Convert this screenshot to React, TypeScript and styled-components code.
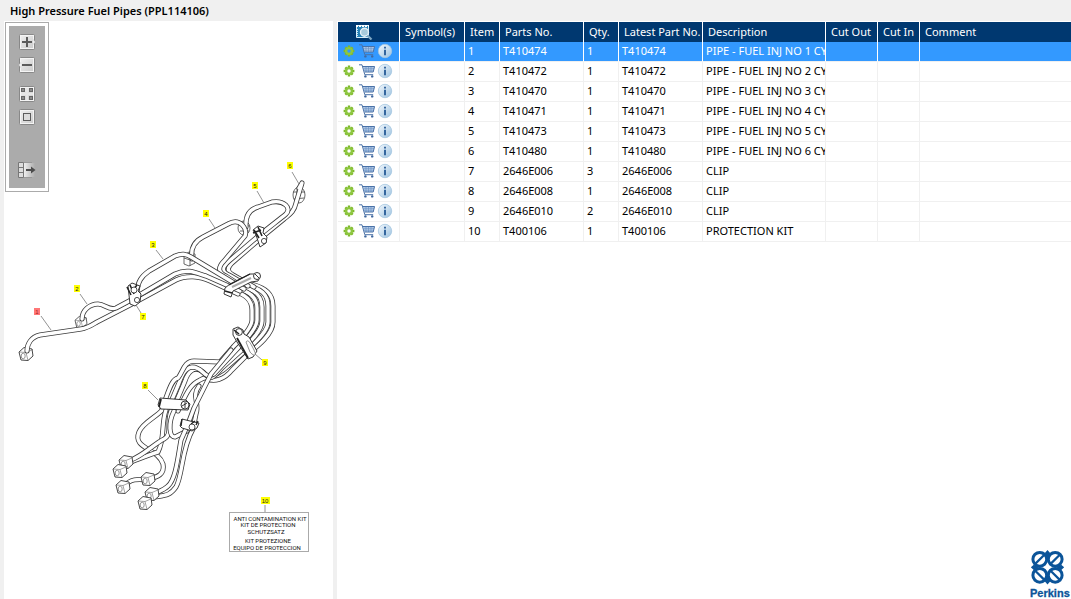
import React from 'react';
import styled, { createGlobalStyle } from 'styled-components';

const GlobalStyle = createGlobalStyle`
  * { box-sizing: border-box; }
  body { margin: 0; background: #f0f0f0; color: #000; font-family: "Noto Sans", "Open Sans", sans-serif; font-size: 11px; }
`;

const Page = styled.div`
  min-height: 100vh;
  display: flex;
  flex-direction: column;
`;
const Title = styled.h1`
  margin: 0;
  height: 21px;
  padding: 0 10px;
  font-family: "Noto Sans", "Open Sans", sans-serif;
  font-size: 11px;
  line-height: 21px;
  font-weight: 600;
`;
const Content = styled.main`
  flex: 1;
  display: grid;
  grid-template-columns: 329px minmax(0, 1fr);
  gap: 4px;
  padding-left: 4px;
`;
const DrawingPanel = styled.section`
  position: relative;
  background: #fff;
`;
const Drawing = styled.svg`
  display: block;
  width: 100%;
  height: auto;
`;
const Toolbar = styled.div`
  position: absolute;
  left: 1px;
  top: 1px;
  display: flex;
  flex-direction: column;
  align-items: center;
  gap: 7px;
  width: 44px;
  padding: 11px 0 13px;
  border: 1px solid #ababab;
  background: #ababab;
  box-shadow: inset 0 0 0 3px #fff;
`;
const ToolButton = styled.button<{ $space?: number }>`
  display: block;
  width: 18px;
  height: 16px;
  margin: ${p => p.$space || 0}px 0 0;
  padding: 0;
  border: 0;
  background: none;
  svg { display: block; }
`;
const PartsPanel = styled.section`
  display: flex;
  flex-direction: column;
  justify-content: space-between;
  padding: 1px 0 0 1px;
  background: #fff;
`;
const PartsTable = styled.table`
  width: 100%;
  table-layout: fixed;
  border-collapse: separate;
  border-spacing: 0;
`;
const HeadCell = styled.th`
  height: 20px;
  padding: 0 0 0 5px;
  background: #003870;
  color: #fff;
  border-right: 1px solid #fff;
  font-weight: 400;
  line-height: 20px;
  text-align: left;
  white-space: nowrap;
  &:first-child { padding: 0 0 0 17px; }
  &:last-child { border-right: 0; }
  svg { display: block; }
`;
const Row = styled.tr<{ $selected?: boolean }>`
  background: ${p => (p.$selected ? '#3399ff' : '#fff')};
  color: ${p => (p.$selected ? '#fff' : '#000')};
  td { border-right-color: ${p => (p.$selected ? '#fff' : '#f0f0f0')}; }
`;
const Cell = styled.td`
  height: 20px;
  padding: 0 0 2px 3px;
  border-right: 1px solid;
  border-bottom: 1px solid #f0f0f0;
  line-height: 17px;
  white-space: nowrap;
  overflow: hidden;
  &:last-child { border-right: 0; }
`;
const Actions = styled.div`
  display: flex;
  align-items: center;
  gap: 2px;
`;
const IconButton = styled.button`
  width: 16px;
  height: 16px;
  padding: 0;
  border: 0;
  background: none;
  svg { display: block; }
`;
const Brand = styled.footer`
  align-self: flex-end;
  width: 41px;
  svg { display: block; }
`;

const PlateIcon = ({ children }: { children: React.ReactNode }) => (
  <svg width="18" height="16" viewBox="0 0 18 16">
    <defs>
      <linearGradient id="plate" x1="0" y1="0" x2="1" y2="1">
        <stop offset="0" stopColor="#f2f2f2" />
        <stop offset="1" stopColor="#c9c9c9" />
      </linearGradient>
    </defs>
    {children}
  </svg>
);
const Plate = () => (
  <>
    <rect x="1.5" y=".5" width="15" height="15" rx="1" fill="url(#plate)" stroke="#888" />
    <rect x="2.5" y="1.5" width="13" height="13" fill="none" stroke="#f4f4f4" />
  </>
);
const ZoomInIcon = () => (
  <PlateIcon>
    <Plate />
    <path d="M15.5 6l2.2 2-2.2 2" fill="#eee" stroke="#999" strokeWidth=".6" />
    <path d="M4 8h10M9 3v10" stroke="#5c5c5c" strokeWidth="2" />
  </PlateIcon>
);
const ZoomOutIcon = () => (
  <PlateIcon>
    <Plate />
    <path d="M2.5 6L.3 8l2.2 2" fill="#eee" stroke="#999" strokeWidth=".6" />
    <path d="M4 8h10" stroke="#5c5c5c" strokeWidth="2" />
  </PlateIcon>
);
const FitIcon = () => (
  <PlateIcon>
    <Plate />
    <g fill="#8c8c8c" stroke="#666">
      <rect x="3.5" y="2.5" width="3" height="3" /><rect x="11.5" y="2.5" width="3" height="3" />
      <rect x="3.5" y="10.5" width="3" height="3" /><rect x="11.5" y="10.5" width="3" height="3" />
    </g>
    <path d="M3 8h12M9 2v12" stroke="#e6e6e6" strokeWidth="2" />
  </PlateIcon>
);
const ActualIcon = () => (
  <PlateIcon>
    <Plate />
    <rect x="5.5" y="4.5" width="7" height="7" fill="#dcdcdc" stroke="#5c5c5c" />
  </PlateIcon>
);
const HidePanelIcon = () => (
  <PlateIcon>
    <defs>
      <linearGradient id="fade"><stop offset="0" stopColor="#eee" /><stop offset="1" stopColor="#ababab" /></linearGradient>
    </defs>
    <rect x="6" y="1" width="11" height="14" fill="url(#fade)" />
    <path d="M.5 .5h5v15h-5z" fill="#ddd" stroke="#777" />
    <path d="M0 5.5h5M0 10.5h5" stroke="#777" />
    <path d="M6 .5h8M6 15.5h8" stroke="#999" />
    <path d="M8 8h6" stroke="#4c4c4c" strokeWidth="2" />
    <path d="M13 4.5l4.5 3.5-4.5 3.5z" fill="#4c4c4c" />
  </PlateIcon>
);

const GearIcon = ({ hole }: { hole: string }) => (
  <svg width="16" height="16" viewBox="0 0 16 16">
    <path d="M8 2.6v10.8M2.6 8h10.8M4.3 4.3l7.4 7.4M11.7 4.3l-7.4 7.4" stroke="#7fb92c" strokeWidth="2.4" />
    <circle cx="8" cy="8" r="2.9" fill={hole} stroke="#8dc63f" strokeWidth="2.4" />
  </svg>
);
const CartIcon = () => (
  <svg width="16" height="16" viewBox="0 0 16 16">
    <path d="M4 3.5h11.5L14 9H5.5z" fill="#b9cfe9" />
    <path d="M4.5 5.3h10.5M5 7.2h9.5M7 3.5V9M9.5 3.5V9M12 3.5V9" stroke="#6b92c4" strokeWidth=".7" />
    <path d="M0 1.8h3L5.8 11.7h8.4M4 3.5h11.6L14.2 9H5.6" fill="none" stroke="#4a72a8" strokeWidth="1" />
    <circle cx="6.4" cy="13.4" r="1.2" fill="#41699f" />
    <circle cx="13.2" cy="13.4" r="1.2" fill="#41699f" />
  </svg>
);
const InfoIcon = () => (
  <svg width="16" height="16" viewBox="0 0 16 16">
    <defs>
      <linearGradient id="info" x1="0" y1="0" x2="1" y2="1">
        <stop offset="0" stopColor="#f4f9fd" /><stop offset="1" stopColor="#9cc2e0" />
      </linearGradient>
    </defs>
    <circle cx="8" cy="8" r="6.7" fill="url(#info)" stroke="#a5c6e1" strokeWidth=".8" />
    <path d="M7 3.7h2v1.8H7zM7 6.8h2v5.4H7z" fill="#34669f" />
  </svg>
);
const PreviewIcon = () => (
  <svg width="18" height="16" viewBox="0 0 18 16">
    <path d="M1.5 1.5h12v12h-12z" fill="#2581b7" stroke="#d9effa" />
    <path d="M1 2h13" stroke="#fff" strokeWidth="2" strokeDasharray="2 1" />
    <path d="M2.5 5v8" stroke="#cbe8f5" strokeDasharray="1 1" />
    <circle cx="9.5" cy="8.3" r="4" fill="#a9cbdc" stroke="#e6f1f7" strokeWidth="1.4" />
    <path d="M12.5 11.5l4 4" stroke="#7fa8c4" strokeWidth="2.2" />
  </svg>
);

const PIPES = [
  'M251 284C266 288 273 294 273 306V322C273 334 258 346 249 353L232 370C224 380 214 382 207 379',
  'M247 285C261 289 268 294 268 306V322C268 332 254 344 244 352L228 366C216 378 206 376 200 380C188 385 184 400 178 411',
  'M242 287C256 290 262 296 262 307V321C262 330 252 340 242 350L222 368C212 380 210 380 203 372C194 365 188 372 185 381L172 412',
  'M238 289C251 292 257 298 257 308V320C257 328 248 338 238 348L214 374C203 380 204 367 192 367C185 368 182 375 179 383L168 409',
  'M232 291C246 294 252 300 252 310V320C252 326 245 335 234 346L220 362L194 361C184 361 183 372 178 378C171 379 168 394 162 408',
  'M299 188L302 183L296 203C294 212 290 214 284 219L262 237L232 263C226 269 228 272 233 275L254 287',
  'M246 227C245 214 251 209 258 207L272 202C284 200 292 208 286 214C280 219 272 225 262 233L229 261C221 268 222 272 229 275L248 286',
  'M192 259C190 246 197 240 203 237L228 224C240 217 248 229 245 236L224 261C217 268 219 273 226 276L243 287',
  'M27 351C27 344 31 337 40 335L81 329C88 328 92 325 97 322L130 305L176 280C186 275 200 276 210 281L238 294',
  'M82 319C82 310 90 304 98 304C105 304 109 311 116 308L131 300L175 274C188 268 196 273 206 276L240 291',
  'M137 295C137 281 142 276 149 271L175 256C182 253 186 254 191 257L244 289',
  'M163 409C157 417 143 422 139 432C132 449 158 448 163 464C165 474 158 477 149 479',
  'M166 410C161 424 165 439 158 452C151 454 142 458 128 463',
  'M171 411C166 424 173 434 164 439C154 444 144 455 131 460',
  'M174 411C168 423 169 437 175 437L187 431',
  'M123 487C131 478 138 479 149 480',
  'M199 386C191 397 200 403 196 414L193 429C181 450 183 475 176 487C169 497 164 495 149 498',
  'M231 350L211 374L194 408L188 424L181 440C178 456 176 479 168 486C163 491 156 492 150 496',
];

const NUTS: [number, number, number][] = [
  [26, 354, 7], [81, 322, 6], [126, 462, 7], [120, 471, 7], [123, 487, 7], [148, 479, 7], [152, 494, 7], [145, 503, 7],
];

const CALLOUTS: { n: number; x: number; y: number; line: string; selected?: boolean }[] = [
  { n: 1, x: 37, y: 312, line: 'M41 316L51 330', selected: true },
  { n: 2, x: 77, y: 289, line: 'M80 294L87 304' },
  { n: 3, x: 153, y: 245, line: 'M156 250L163 259' },
  { n: 4, x: 206, y: 214, line: 'M209 219L215 228' },
  { n: 5, x: 255, y: 186, line: 'M257 191L264 203' },
  { n: 6, x: 290, y: 166, line: 'M292 172L299 184' },
  { n: 7, x: 143, y: 317, line: 'M136 305L141 313' },
  { n: 8, x: 145, y: 386, line: 'M148 390L158 400' },
  { n: 9, x: 265, y: 363, line: 'M255 354L262 360' },
  { n: 10, x: 265, y: 501, line: 'M265 505V512' },
];

const KIT_LINES: [string, number, number][] = [
  ['ANTI CONTAMINATION KIT', 270, 521],
  ['KIT DE PROTECTION', 268, 527],
  ['SCHUTZSATZ', 266, 534],
  ['KIT PROTEZIONE', 268, 543],
  ['EQUIPO DE PROTECCION', 267, 550],
];

const Nut = ({ x, y, r }: { x: number; y: number; r: number }) => (
  <g transform={`translate(${x} ${y}) scale(${r / 7})`} fill="#fff" stroke="#333" strokeWidth=".9" strokeLinejoin="round">
    <path d="M-7 -2L-2 -6.5L6 -5L7 2L2 6.5L-5 6Z" />
    <path d="M-7 -2L0 -1.5L7 -4.5M0 -1.5L2 6.5" fill="none" stroke="#666" strokeWidth=".6" />
    <ellipse cx="-2.8" cy="2" rx="2" ry="2.8" fill="none" stroke="#555" strokeWidth=".6" />
  </g>
);

const PipeDrawing = () => (
  <Drawing viewBox="4 21 329 578" role="img" aria-label="High pressure fuel pipes">
    <g fill="none" stroke="#444" strokeWidth=".8">
      <ellipse cx="299" cy="195" rx="6" ry="8" /><path d="M293 192h12M294 199l10-1M297 188v14" />
      <ellipse cx="244" cy="228" rx="6" ry="7" /><path d="M239 225l11 1M240 231h9" />
      <path d="M184 255l5-3 6 2v9l-6 3-5-2zM184 258l6 2 5-2M190 260v6" />
    </g>
    {NUTS.slice(0, 2).map(([x, y, r]) => <Nut key={x} x={x} y={y} r={r} />)}
    {PIPES.map(d => (
      <g key={d} fill="none" strokeLinejoin="round">
        <path d={d} stroke="#3a3a3a" strokeWidth="5" strokeLinecap="round" />
        <path d={d} stroke="#fff" strokeWidth="3.4" strokeLinecap="round" />
      </g>
    ))}
    {NUTS.slice(2).map(([x, y, r]) => <Nut key={`${x}-${y}`} x={x} y={y} r={r} />)}
    <g fill="#fff" stroke="#222" strokeWidth=".9" strokeLinejoin="round">
      <path d="M128 286l4-3 8 3-2 5 3 3-1 8-5 4-5-2-1-9z" />
      <path d="M127 287l4 8M130 285l4 9M137 285l-4 5" strokeWidth="1.6" />
      <circle cx="137" cy="300" r="2.6" strokeWidth=".8" />
      <circle cx="134" cy="290" r="3" strokeWidth=".8" />
      <path d="M253 230l5-4 6 2-1 5 4 4-1 6-6 4-4-12z" />
      <path d="M254 230l5 8M258 227l4 9M253 233l8-3" strokeWidth="1.6" />
      <circle cx="264" cy="241" r="2.6" strokeWidth=".8" />
      <path d="M225 288l5-4L250 274l7 0 3 3-2 4-7 1-18 9-2 6-7-3z" />
      <path d="M232 287l19-9" stroke="#aaa" strokeWidth="2" />
      <path d="M229 285l21-11M225 291l7 2" strokeWidth="1.4" />
      <circle cx="257" cy="276" r="3.5" /><path d="M255 274l4 4" />
      <path d="M233 329l5-2 5 3 1 4 5 3 8 14-4 6-5 2-11-17-4-7z" />
      <path d="M237 338l11 20" strokeWidth="1.8" />
      <path d="M246 342c2-3 4 0 8 8s-2 5-4 2z" stroke="#777" strokeWidth=".8" />
      <circle cx="239" cy="332" r="3.4" /><path d="M234 330l5 4" strokeWidth="1.6" />
      <path d="M160 398l26 2 4 4-2 6-27-1-3-4z" />
      <path d="M161 399l-2 8" strokeWidth="1.8" />
      <circle cx="185" cy="405" r="4" /><path d="M182 406l5-3M185 402v6" strokeWidth=".9" />
      <path d="M182 419l12 3 5 1-2 5-5 3-10-3-2-2z" />
      <path d="M182 419l-1 7M195 421l-4 3M198 421l-2 4" strokeWidth="1.4" />
      <circle cx="192" cy="427" r="3" strokeWidth=".8" />
    </g>
    <rect x="229.5" y="512.5" width="79" height="39" fill="#fff" stroke="#aaa" />
    <g fill="#111" fontFamily="Roboto, Liberation Sans, sans-serif" fontSize="6" textAnchor="middle">
      {KIT_LINES.map(([text, x, y]) => <text key={text} x={x} y={y}>{text}</text>)}
    </g>
    {CALLOUTS.map(c => (
      <g key={c.n}>
        <path d={c.line} stroke="#777" strokeWidth=".8" />
        <rect x={c.x - (c.n > 9 ? 4 : 3)} y={c.y - 4} width={c.n > 9 ? 9 : 6} height="7" fill={c.selected ? '#f77' : '#ff0'} />
        <text x={c.x} y={c.y + 2} textAnchor="middle" fontFamily="Liberation Sans, sans-serif" fontSize="6" fill={c.selected ? '#a22' : '#222'}>{c.n}</text>
      </g>
    ))}
  </Drawing>
);

const BrandLogo = () => (
  <svg width="41" height="49" viewBox="0 0 41 49" role="img" aria-label="Perkins">
    <g fill="none" stroke="#0b5499" strokeWidth="3">
      <circle cx="9.8" cy="9.3" r="6.9" /><circle cx="25.2" cy="9.3" r="6.9" />
      <circle cx="9.8" cy="25.3" r="6.9" /><circle cx="25.2" cy="25.3" r="6.9" />
      <path d="M5.2 13.9l9.2-9.2M20.6 13.9l9.2-9.2M5.2 20.7l9.2 9.2M20.6 20.7l9.2 9.2" strokeWidth="2.2" />
    </g>
    <g fill="#0b5499">
      <path d="M17.5 0l2.6 3-2.6 5-2.6-5zM17.5 26.6l2.6 5-2.6 3-2.6-3z" />
      <path d="M.8 17.3l3-2.6 5 2.6-5 2.6zM26.2 17.3l5-2.6 3 2.6-3 2.6z" />
    </g>
    <text x="0" y="47" fill="#0b5499" stroke="#0b5499" strokeWidth=".3" fontFamily="Liberation Sans, sans-serif" fontWeight="700" fontSize="11">Perkins</text>
  </svg>
);

const COLUMNS: [string, number?][] = [
  ['Symbol(s)', 65], ['Item', 35], ['Parts No.', 84], ['Qty.', 35], ['Latest Part No.', 84],
  ['Description', 123], ['Cut Out', 52], ['Cut In', 42], ['Comment'],
];

const PARTS: [string, number, string][] = [
  ['T410474', 1, 'PIPE - FUEL INJ NO 1 CY'],
  ['T410472', 1, 'PIPE - FUEL INJ NO 2 CY'],
  ['T410470', 1, 'PIPE - FUEL INJ NO 3 CY'],
  ['T410471', 1, 'PIPE - FUEL INJ NO 4 CY'],
  ['T410473', 1, 'PIPE - FUEL INJ NO 5 CY'],
  ['T410480', 1, 'PIPE - FUEL INJ NO 6 CY'],
  ['2646E006', 3, 'CLIP'],
  ['2646E008', 1, 'CLIP'],
  ['2646E010', 2, 'CLIP'],
  ['T400106', 1, 'PROTECTION KIT'],
];

export default function App() {
  return (
    <Page>
      <GlobalStyle />
      <Title>High Pressure Fuel Pipes (PPL114106)</Title>
      <Content>
        <DrawingPanel>
          <PipeDrawing />
          <Toolbar role="toolbar" aria-label="Drawing tools">
            <ToolButton aria-label="Zoom in"><ZoomInIcon /></ToolButton>
            <ToolButton aria-label="Zoom out"><ZoomOutIcon /></ToolButton>
            <ToolButton aria-label="Fit to window" $space={6}><FitIcon /></ToolButton>
            <ToolButton aria-label="Actual size"><ActualIcon /></ToolButton>
            <ToolButton aria-label="Hide list" $space={30}><HidePanelIcon /></ToolButton>
          </Toolbar>
        </DrawingPanel>
        <PartsPanel>
          <PartsTable>
            <colgroup>
              <col width={62} />
              {COLUMNS.map(([name, width]) => <col key={name} width={width} />)}
            </colgroup>
            <thead>
              <tr>
                <HeadCell scope="col" aria-label="Actions"><PreviewIcon /></HeadCell>
                {COLUMNS.map(([name]) => <HeadCell key={name} scope="col">{name}</HeadCell>)}
              </tr>
            </thead>
            <tbody>
              {PARTS.map(([no, qty, description], i) => (
                <Row key={no} $selected={i === 0}>
                  <Cell>
                    <Actions>
                      <IconButton aria-label="Settings"><GearIcon hole={i === 0 ? '#3399ff' : '#fff'} /></IconButton>
                      <IconButton aria-label="Add to cart"><CartIcon /></IconButton>
                      <IconButton aria-label="Information"><InfoIcon /></IconButton>
                    </Actions>
                  </Cell>
                  <Cell />
                  <Cell>{i + 1}</Cell>
                  <Cell>{no}</Cell>
                  <Cell>{qty}</Cell>
                  <Cell>{no}</Cell>
                  <Cell>{description}</Cell>
                  <Cell />
                  <Cell />
                  <Cell />
                </Row>
              ))}
            </tbody>
          </PartsTable>
          <Brand><BrandLogo /></Brand>
        </PartsPanel>
      </Content>
    </Page>
  );
}
